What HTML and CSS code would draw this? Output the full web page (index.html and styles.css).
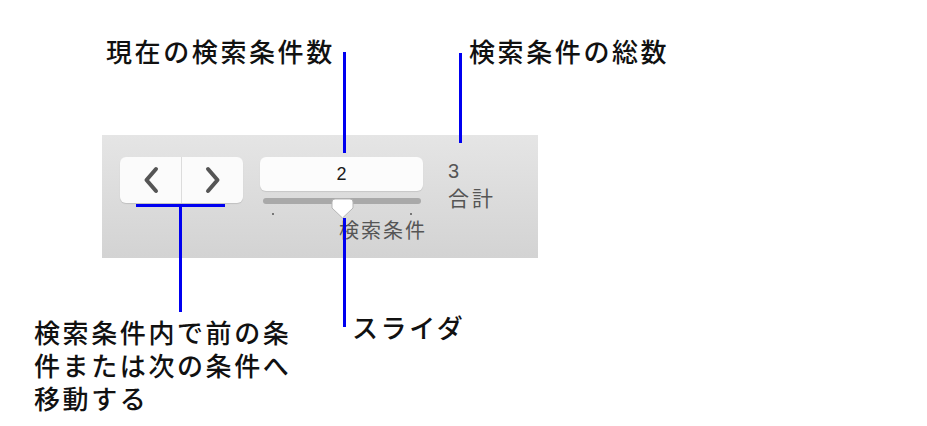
FILE: index.html
```html
<!DOCTYPE html>
<html lang="ja">
<head>
    <meta charset="UTF-8">
    <meta name="viewport" content="width=device-width, initial-scale=1.0">
    <title>検索条件ナビゲーション</title>
    <link rel="stylesheet" href="styles.css">
</head>
<body>
    <div class="stage">
        <!-- ツールバー本体 -->
        <div class="toolbar">
            <div class="segment">
                <button class="seg-btn" type="button" aria-label="前の条件">
                    <svg width="16" height="28" viewBox="0 0 16 28"><path d="M13 3 L3.5 14 L13 25" fill="none" stroke="#555" stroke-width="4" stroke-linejoin="round" stroke-linecap="round"/></svg>
                </button>
                <button class="seg-btn" type="button" aria-label="次の条件">
                    <svg width="16" height="28" viewBox="0 0 16 28"><path d="M3 3 L12.5 14 L3 25" fill="none" stroke="#555" stroke-width="4" stroke-linejoin="round" stroke-linecap="round"/></svg>
                </button>
            </div>

            <div class="current">
                <div class="field">2</div>
                <div class="slider">
                    <div class="track"></div>
                    <svg class="knob" width="23" height="21" viewBox="0 0 23 21">
                        <path d="M4 1 H19 Q22 1 22 4 V10 L11.5 20 L1 10 V4 Q1 1 4 1 Z" fill="#fff" stroke="#b5b5b5" stroke-width="1"/>
                    </svg>
                </div>
                <div class="ticks">
                    <span class="tick"></span>
                    <span class="tick"></span>
                </div>
                <div class="caption">検索条件</div>
            </div>

            <div class="total">
                <div class="total-num">3</div>
                <div class="total-label">合計</div>
            </div>
        </div>

        <!-- 説明ラベルと引き出し線 -->
        <div class="note note-current">現在の検索条件数</div>
        <div class="note note-total">検索条件の総数</div>
        <div class="note note-slider">スライダ</div>
        <div class="note note-nav">
            <div>検索条件内で前の条</div>
            <div>件または次の条件へ</div>
            <div>移動する</div>
        </div>

        <span class="line line-current"></span>
        <span class="line line-total"></span>
        <span class="line line-nav-h"></span>
        <span class="line line-nav-v"></span>
        <span class="line line-slider"></span>
    </div>
</body>
</html>
```

FILE: styles.css
```css
body {
    margin: 0;
    background-color: #fff;
    font-family: "Noto Sans CJK JP", "Liberation Sans", sans-serif;
    color: #111;
}
.stage {
    position: relative;
    width: 927px;
    height: 426px;
    padding-top: 135px;
    box-sizing: border-box;
}

/* ツールバー */
.toolbar {
    display: flex;
    align-items: flex-start;
    width: 436px;
    height: 123px;
    margin-left: 102px;
    padding: 22px 0 0 18px;
    box-sizing: border-box;
    background: linear-gradient(#e5e5e5, #d3d3d3);
}
.segment {
    display: flex;
    width: 123px;
    height: 46px;
    background-color: #fbfbfb;
    border-radius: 6px;
    box-shadow: 0 1px 1px rgba(0, 0, 0, 0.12);
}
.seg-btn {
    flex: 1;
    display: flex;
    align-items: center;
    justify-content: center;
    border: none;
    padding: 0;
    background: none;
}
.seg-btn + .seg-btn {
    border-left: 1px solid #dcdcdc;
}
.current {
    width: 163px;
    margin-left: 17px;
}
.field {
    height: 34px;
    line-height: 34px;
    text-align: center;
    background-color: #fcfcfc;
    border-radius: 6px;
    box-shadow: 0 1px 1px rgba(0, 0, 0, 0.1);
    font-family: "Liberation Sans", sans-serif;
    font-size: 18px;
    color: #1a1a1a;
}
.slider {
    position: relative;
    height: 20px;
    margin-top: 7px;
}
.track {
    height: 6px;
    margin: 2px 2px 0 3px;
    background-color: #a9a9a9;
    border-radius: 3px;
}
.knob {
    position: absolute;
    left: 71px;
    top: 0;
}
.ticks {
    display: flex;
    justify-content: space-between;
    padding: 0 11px 0 12px;
    margin-top: -5px;
}
.tick {
    width: 2px;
    height: 2px;
    background-color: #777;
}
.caption {
    margin-top: 4px;
    margin-right: -4px;
    text-align: right;
    font-size: 20px;
    line-height: 22px;
    letter-spacing: 2px;
    color: #555;
}
.total {
    margin-left: 25px;
    color: #555;
}
.total-num {
    font-family: "Liberation Sans", sans-serif;
    font-size: 20px;
    line-height: 22px;
    margin-top: 3px;
}
.total-label {
    font-size: 21px;
    line-height: 26px;
    letter-spacing: 3px;
    margin-top: 2px;
}

/* 説明ラベル */
.note {
    position: absolute;
    font-size: 26px;
    font-weight: 500;
    line-height: 26px;
    letter-spacing: 2.6px;
    color: #111;
    white-space: nowrap;
}
.note-current { left: 106px; top: 38px; }
.note-total { left: 469px; top: 38px; }
.note-slider { left: 352px; top: 314px; }
.note-nav {
    left: 34px;
    top: 319px;
    display: flex;
    flex-direction: column;
    gap: 7px;
}

/* 引き出し線 */
.line {
    position: absolute;
    background-color: #0000f0;
}
.line-current { left: 343px; top: 52px; width: 3px; height: 101px; }
.line-total { left: 459px; top: 53px; width: 3px; height: 90px; }
.line-nav-h { left: 136px; top: 204px; width: 89px; height: 3px; }
.line-nav-v { left: 179px; top: 206px; width: 3px; height: 106px; }
.line-slider { left: 343px; top: 218px; width: 3px; height: 109px; }
```
